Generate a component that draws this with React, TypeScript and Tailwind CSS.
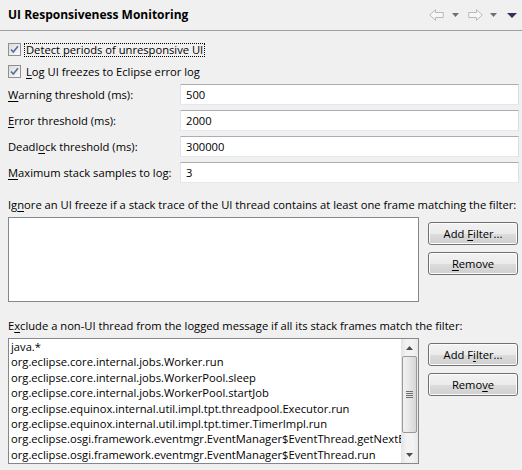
import React from "react";

function Arrow({ dir }: { dir: "left" | "right" }) {
  return (
    <svg width="15" height="12" viewBox="0 0 15 12" className={dir === "right" ? "-scale-x-100" : ""}>
      <path d="M0.7 6 L6.5 0.7 L6.5 3.5 L14.3 3.5 L14.3 8.5 L6.5 8.5 L6.5 11.3 Z" fill="#f7f7f7" stroke="#b9b9b9" strokeWidth="1" strokeLinejoin="round" />
    </svg>
  );
}

function Tri({ color, w = 7, h = 4 }: { color: string; w?: number; h?: number }) {
  return (
    <svg width={w} height={h} viewBox={`0 0 ${w} ${h}`}>
      <path d={`M0 0 L${w} 0 L${w / 2} ${h} Z`} fill={color} />
    </svg>
  );
}

function Check() {
  return (
    <div className="w-[13px] h-[13px] border border-[#8e8f8f] bg-[linear-gradient(135deg,#dcdcdc,#fbfbfb)] flex items-center justify-center shrink-0">
      <svg width="11" height="11" viewBox="0 0 11 11">
        <path d="M2 5.5 L4.3 8 L9 2.2" fill="none" stroke="#5a6d9c" strokeWidth="1.6" />
      </svg>
    </div>
  );
}

function Field({ label, value }: { label: React.ReactNode; value: string }) {
  return (
    <div className="flex items-center h-[21px] mt-[5px]">
      <div className="w-[172px] shrink-0 whitespace-nowrap">
        <span>{label}</span>
      </div>
      <div className="w-[339px] h-[21px] border border-t-[#abadb3] border-l-[#e2e3ea] border-r-[#dbdfe6] border-b-[#e3e9ef] bg-white flex items-center pl-[5px]">
        <span>{value}</span>
      </div>
    </div>
  );
}

function Btn({ children }: { children: React.ReactNode }) {
  return (
    <div className="w-[90px] h-[23px] rounded-[3px] border border-[#707070] bg-[linear-gradient(to_bottom,#f2f2f2_0%,#ebebeb_50%,#dddddd_51%,#cfcfcf_100%)] shadow-[inset_0_0_0_1px_#fcfcfc] flex items-center justify-center">
      <span className="whitespace-pre">{children}</span>
    </div>
  );
}

function U({ children }: { children: React.ReactNode }) {
  return <span className="underline underline-offset-[2px]">{children}</span>;
}

const items = [
  "java.*",
  "org.eclipse.core.internal.jobs.Worker.run",
  "org.eclipse.core.internal.jobs.WorkerPool.sleep",
  "org.eclipse.core.internal.jobs.WorkerPool.startJob",
  "org.eclipse.equinox.internal.util.impl.tpt.threadpool.Executor.run",
  "org.eclipse.equinox.internal.util.impl.tpt.timer.TimerImpl.run",
  "org.eclipse.osgi.framework.eventmgr.EventManager$EventThread.getNextEvent",
  "org.eclipse.osgi.framework.eventmgr.EventManager$EventThread.run",
];

export default function App() {
  return (
    <div className="w-[522px] h-[470px] overflow-hidden bg-[#f0f0f0] text-black text-[11.2px] leading-[16px] font-['Segoe_UI','Open_Sans',sans-serif]">
      <div className="h-[31px] border-b border-[#a0a0a0] flex items-center justify-between pl-2 pr-[5px]">
        <div className="font-bold text-[12px]">UI Responsiveness Monitoring</div>
        <div className="flex items-center gap-0">
          <Arrow dir="left" />
          <div className="ml-[8px] mr-[9px]"><Tri color="#707070" /></div>
          <Arrow dir="right" />
          <div className="ml-[7px] mr-[10px]"><Tri color="#707070" /></div>
          <Tri color="#3a2a5e" w={10} h={5} />
        </div>
      </div>

      <div className="pl-2">
        <div className="mt-[11px] h-[15px] flex items-center">
          <Check />
          <div className="ml-[3px] border border-dotted border-black px-[1px] h-[14px] flex items-center whitespace-nowrap">
            <span>De<U>t</U>ect periods of unresponsive UI</span>
          </div>
        </div>
        <div className="mt-[7px] h-[15px] flex items-center">
          <Check />
          <div className="ml-[4px] px-[1px] whitespace-nowrap">
            <span><U>L</U>og UI freezes to Eclipse error log</span>
          </div>
        </div>

        <Field label={<><U>W</U>arning threshold (ms):</>} value="500" />
        <Field label={<><U>E</U>rror threshold (ms):</>} value="2000" />
        <Field label={<>Deadl<U>o</U>ck threshold (ms):</>} value="300000" />
        <Field label={<><U>M</U>aximum stack samples to log:</>} value="3" />

        <div className="mt-[14px] h-[16px] whitespace-nowrap">
          Ig<U>n</U>ore an UI freeze if a stack trace of the UI thread contains at least one frame matching the filter:
        </div>
        <div className="mt-[4px] flex">
          <div className="w-[411px] h-[85px] border border-[#828790] bg-white shrink-0" />
          <div className="ml-[9px] mt-[5px] flex flex-col gap-[7px]">
            <Btn>Add <U>F</U>ilter...</Btn>
            <Btn><U>R</U>emove</Btn>
          </div>
        </div>

        <div className="mt-[16px] h-[16px] whitespace-nowrap">
          E<U>x</U>clude a non-UI thread from the logged message if all its stack frames match the filter:
        </div>
        <div className="mt-[4px] flex">
          <div className="w-[411px] h-[126px] border border-[#828790] bg-white shrink-0 flex">
            <div className="flex-1 overflow-hidden pl-[2px] leading-[15.4px] whitespace-nowrap">
              {items.map((t) => (
                <div key={t}>{t}</div>
              ))}
            </div>
            <div className="w-[17px] h-full bg-[linear-gradient(to_right,#e3e3e3,#f2f2f2_30%,#f2f2f2_70%,#e8e8e8)] flex flex-col items-center">
              <div className="h-[17px] flex items-center justify-center">
                <svg width="7" height="4" viewBox="0 0 7 4"><path d="M0 4 L3.5 0 L7 4 Z" fill="#4d4d4d" /></svg>
              </div>
              <div className="w-[15px] h-[77px] rounded-[2px] border border-[#9a9a9a] bg-[linear-gradient(to_right,#f2f2f2,#e6e6e6_50%,#d6d6d6)] flex flex-col items-center justify-center gap-[1px]">
                <div className="w-[7px] h-[1px] bg-[#707070]" />
                <div className="w-[7px] h-[1px] bg-[#707070]" />
                <div className="w-[7px] h-[1px] bg-[#707070]" />
                <div className="w-[7px] h-[1px] bg-[#707070]" />
              </div>
              <div className="flex-1" />
              <div className="h-[17px] flex items-center justify-center">
                <svg width="7" height="4" viewBox="0 0 7 4"><path d="M0 0 L7 0 L3.5 4 Z" fill="#4d4d4d" /></svg>
              </div>
            </div>
          </div>
          <div className="ml-[9px] mt-[5px] flex flex-col gap-[7px]">
            <Btn>Add F<U>i</U>lter...</Btn>
            <Btn>Remo<U>v</U>e</Btn>
          </div>
        </div>
      </div>
    </div>
  );
}
